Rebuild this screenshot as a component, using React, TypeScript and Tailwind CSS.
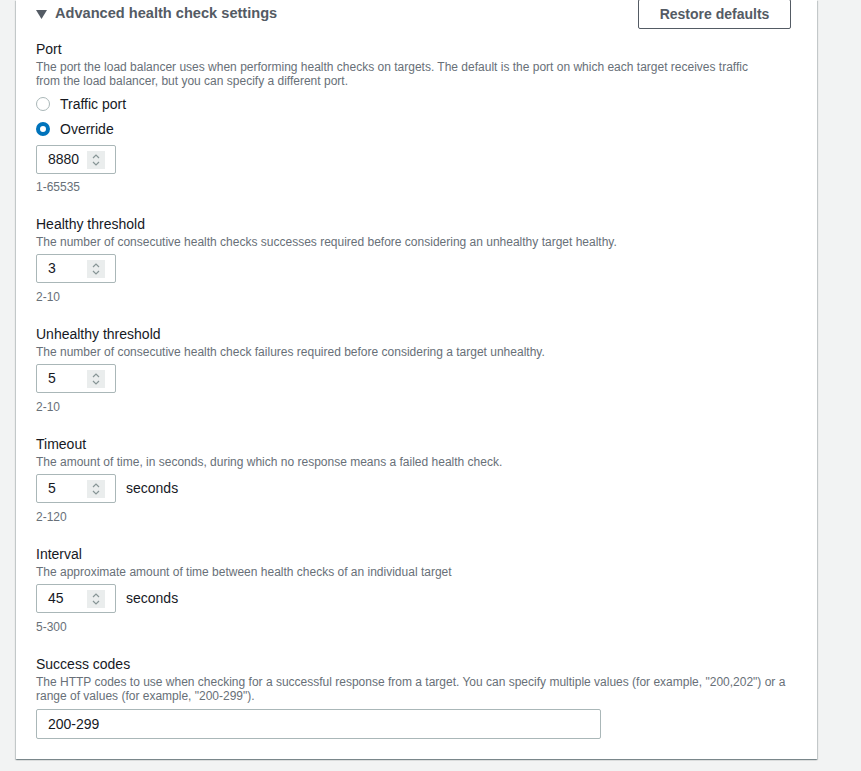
import React from 'react';

const font = { fontFamily: '"Liberation Sans", Arial, sans-serif' };

const Spinner = () => (
  <div className="w-[18px] h-[18px] bg-[#eaeded] flex items-center justify-center">
    <svg width="10" height="14" viewBox="0 0 10 14" fill="none" stroke="#879596" strokeWidth="1.2">
      <path d="M2 5l3-3 3 3" />
      <path d="M2 9l3 3 3-3" />
    </svg>
  </div>
);

const NumberInput = ({ value }: { value: string }) => (
  <div className="w-[80px] h-[29px] border border-[#aab7b8] rounded-[2px] flex items-center justify-between pl-[11px] pr-[10px] bg-white">
    <span className="text-[14px] text-[#16191f]">{value}</span>
    <Spinner />
  </div>
);

interface FieldProps {
  label: string;
  desc: React.ReactNode;
  value: string;
  hint: string;
  unit?: string;
}

const Field = ({ label, desc, value, hint, unit }: FieldProps) => (
  <div className="flex flex-col">
    <div className="text-[14px] leading-[20px] text-[#16191f]">{label}</div>
    <div className="text-[12px] leading-[14px] text-[#687078] mt-px">{desc}</div>
    <div className="flex items-center gap-[10px] mt-[5px]">
      <NumberInput value={value} />
      {unit && <span className="text-[14px] text-[#16191f]">{unit}</span>}
    </div>
    <div className="text-[12px] leading-[16px] text-[#687078] mt-[6px]">{hint}</div>
  </div>
);

const Radio = ({ checked, label }: { checked?: boolean; label: string }) => (
  <label className="flex items-center gap-[10px] h-[20px]">
    {checked ? (
      <span className="w-[14px] h-[14px] rounded-full border-[4px] border-[#0073bb] bg-white" />
    ) : (
      <span className="w-[14px] h-[14px] rounded-full border border-[#aab7b8] bg-white" />
    )}
    <span className="text-[14px] text-[#16191f]">{label}</span>
  </label>
);

export default function App() {
  return (
    <div className="min-h-screen bg-[#f2f3f3] pl-[16px] pb-[12px]" style={font}>
      <div className="w-[801px] bg-white shadow-[0_1px_1px_0_rgba(0,28,36,0.3),1px_1px_1px_0_rgba(0,28,36,0.15),-1px_1px_1px_0_rgba(0,28,36,0.15)] pl-[20px] pr-[26px] pb-[20px]">
        <div className="flex items-start justify-between h-[28px]">
          <div className="flex items-center gap-[8px] mt-[4px] h-[20px]">
            <svg width="11" height="9" viewBox="0 0 11 9">
              <path d="M0 0h11L5.5 9z" fill="#545b64" />
            </svg>
            <span className="text-[14.6px] font-bold text-[#545b64]">Advanced health check settings</span>
          </div>
          <button className="-mt-[1px] h-[30px] w-[153px] border border-[#545b64] rounded-[2px] text-[14px] font-bold text-[#545b64] bg-white">
            Restore defaults
          </button>
        </div>

        <div className="flex flex-col mt-[11px]">
          <div className="text-[14px] leading-[20px] text-[#16191f]">Port</div>
          <div className="text-[12px] leading-[14px] text-[#687078] mt-px">
            The port the load balancer uses when performing health checks on targets. The default is the port on which each target receives traffic
            <br />
            from the load balancer, but you can specify a different port.
          </div>
          <div className="flex flex-col gap-[5px] mt-[6px]">
            <Radio label="Traffic port" />
            <Radio checked label="Override" />
          </div>
          <div className="mt-[6px]">
            <NumberInput value="8880" />
          </div>
          <div className="text-[12px] leading-[16px] text-[#687078] mt-[5px]">1-65535</div>
        </div>

        <div className="flex flex-col gap-[19px] mt-[19px]">
          <Field
            label="Healthy threshold"
            desc="The number of consecutive health checks successes required before considering an unhealthy target healthy."
            value="3"
            hint="2-10"
          />
          <Field
            label="Unhealthy threshold"
            desc="The number of consecutive health check failures required before considering a target unhealthy."
            value="5"
            hint="2-10"
          />
          <Field
            label="Timeout"
            desc="The amount of time, in seconds, during which no response means a failed health check."
            value="5"
            hint="2-120"
            unit="seconds"
          />
          <Field
            label="Interval"
            desc="The approximate amount of time between health checks of an individual target"
            value="45"
            hint="5-300"
            unit="seconds"
          />
          <div className="flex flex-col">
            <div className="text-[14px] leading-[20px] text-[#16191f]">Success codes</div>
            <div className="text-[12px] leading-[14px] text-[#687078] mt-px">
              The HTTP codes to use when checking for a successful response from a target. You can specify multiple values (for example, "200,202") or a
              <br />
              range of values (for example, "200-299").
            </div>
            <div className="mt-[6px] w-[565px] h-[30px] border border-[#aab7b8] rounded-[2px] flex items-center pl-[11px] text-[14px] text-[#16191f]">
              200-299
            </div>
          </div>
        </div>
      </div>
    </div>
  );
}
